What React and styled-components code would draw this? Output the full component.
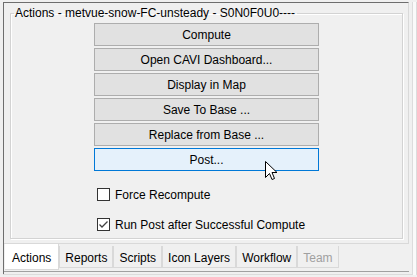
import React from 'react';
import styled, { createGlobalStyle } from 'styled-components';

const GlobalStyle = createGlobalStyle`
  html, body {
    margin: 0;
    padding: 0;
    background: #f0f0f0;
  }
  body {
    font-family: "Liberation Sans", Arial, sans-serif;
    font-size: 12px;
    color: #000;
  }
`;

const buttons = ['Compute', 'Open CAVI Dashboard...', 'Display in Map', 'Save To Base ...', 'Replace from Base ...', 'Post...'];
const tabs = ['Actions', 'Reports', 'Scripts', 'Icon Layers', 'Workflow', 'Team'];

const App = () => {
  return (
    <>
      <GlobalStyle />
      <Window>
        <Split>
          <TabPane>
            <Content>
              <GroupBox>
                <Legend>Actions - metvue-snow-FC-unsteady - S0N0F0U0----</Legend>
                <ButtonColumn>
                  {buttons.map((b) => (
                    <ActionButton key={b} $hover={b === 'Post...'}>{b}</ActionButton>
                  ))}
                </ButtonColumn>
                <CheckList>
                  <CheckRow>
                    <Box />
                    <span>Force Recompute</span>
                  </CheckRow>
                  <CheckRow>
                    <Box>
                      <svg width="11" height="11" viewBox="0 0 11 11">
                        <path d="M1.5 5.5 L4 8 L9.5 2.5" fill="none" stroke="#404040" strokeWidth="1.3" />
                      </svg>
                    </Box>
                    <span>Run Post after Successful Compute</span>
                  </CheckRow>
                </CheckList>
                <Cursor width="13" height="20" viewBox="0 0 13 20">
                  <path d="M0.5 0.5 L0.5 16.5 L4.5 12.5 L7 18.5 L9.5 17.5 L7 11.5 L12 11.5 Z" fill="#fff" stroke="#000" strokeWidth="1" />
                </Cursor>
              </GroupBox>
            </Content>
            <TabStrip>
              {tabs.map((t, i) => (
                <Tab key={t} $selected={i === 0} $disabled={t === 'Team'}>{t}</Tab>
              ))}
            </TabStrip>
          </TabPane>
        </Split>
      </Window>
    </>
  );
};

const Window = styled.div`
  width: 417px;
  height: 277px;
  box-sizing: border-box;
  padding: 2px 4px 2px 3px;
  display: flex;
  background: #f0f0f0;
`;

const Split = styled.div`
  flex: 1;
  display: flex;
  border-right: 1px solid #dcdcdc;
  border-bottom: 1px solid #dcdcdc;
  box-shadow: 3px 0 0 #fafafa, 4px 0 0 #dcdcdc;
  padding-right: 3px;
`;

const TabPane = styled.div`
  flex: 1;
  display: flex;
  flex-direction: column;
  border-left: 1px solid #6e6e6e;
`;

const Content = styled.div`
  height: 242px;
  box-sizing: border-box;
  border-top: 1px solid #6e6e6e;
  border-right: 1px solid #d9d9d9;
  border-bottom: 1px solid #d9d9d9;
  padding: 3px 5px 4px 6px;
  display: flex;
`;

const GroupBox = styled.fieldset`
  position: relative;
  flex: 1;
  margin: 0;
  padding: 2px 0 0 0;
  border: 1px solid #d3d3d3;
  box-shadow: inset 1px 1px 0 #fff, 1px 1px 0 #fff;
  min-width: 0;
`;

const Legend = styled.legend`
  padding: 0 2px 0 1px;
  margin-left: 3px;
  line-height: 15px;
  font-size: 12px;
`;

const ButtonColumn = styled.div`
  display: flex;
  flex-direction: column;
  gap: 2px;
  width: 225px;
  margin-left: 83px;
`;

const ActionButton = styled.button`
  height: 23px;
  box-sizing: border-box;
  margin: 0;
  padding: 0;
  font-family: "Liberation Sans", Arial, sans-serif;
  font-size: 12px;
  color: #000;
  background: ${(p) => (p.$hover ? '#e5f1fb' : '#e1e1e1')};
  border: 1px solid ${(p) => (p.$hover ? '#0078d7' : '#adadad')};
  border-radius: 0;
`;

const CheckList = styled.div`
  display: flex;
  flex-direction: column;
  gap: 17px;
  margin-top: 17px;
  padding-left: 86px;
`;

const CheckRow = styled.label`
  display: flex;
  align-items: center;
  gap: 5px;
  height: 13px;
`;

const Box = styled.span`
  width: 13px;
  height: 13px;
  box-sizing: border-box;
  border: 1px solid #333;
  background: #fff;
  display: flex;
  align-items: center;
  justify-content: center;
`;

const Cursor = styled.svg`
  position: absolute;
  left: 254px;
  top: 140px;
`;

const TabStrip = styled.div`
  display: flex;
  align-items: flex-start;
  padding-left: 1px;
  border-bottom: 1px solid #a0a0a0;
  height: 27px;
`;

const Tab = styled.div`
  box-sizing: border-box;
  padding: ${(p) => (p.$selected ? '2px 7px 0' : '2px 5px 0')};
  height: ${(p) => (p.$selected ? '26px' : '22px')};
  margin-top: ${(p) => (p.$selected ? '0' : '2px')};
  display: flex;
  align-items: center;
  background: ${(p) => (p.$selected ? '#fff' : '#f0f0f0')};
  border: 1px solid #d9d9d9;
  border-top: none;
  border-left: ${(p) => (p.$selected ? 'none' : '1px solid #d9d9d9')};
  color: ${(p) => (p.$disabled ? '#a0a0a0' : '#000')};
  font-size: 12px;
`;

export default App;
